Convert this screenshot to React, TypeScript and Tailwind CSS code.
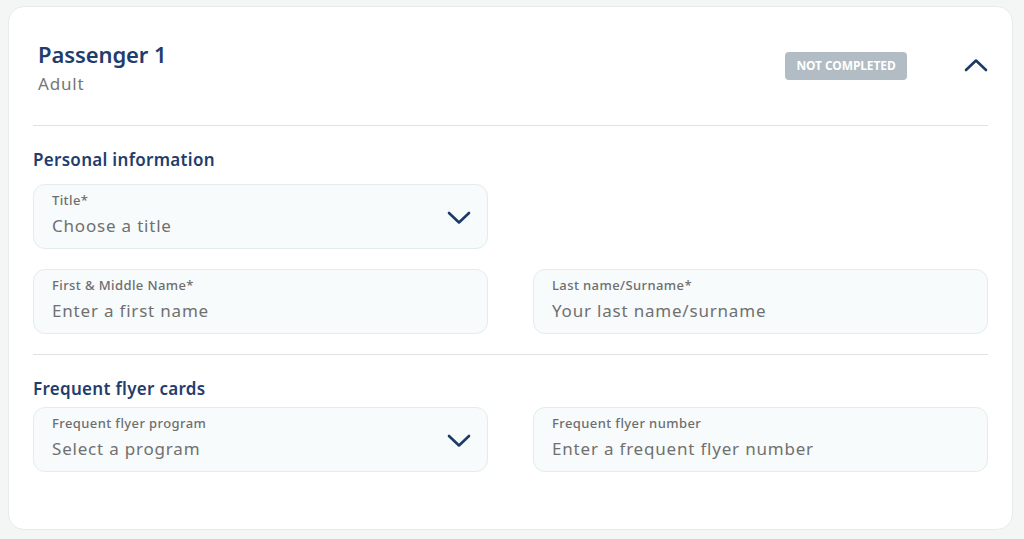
import React from "react";

const ChevronDown = () => (
  <svg width="24" height="14" viewBox="0 0 24 14" fill="none">
    <path d="M2 2L12 11.5L22 2" stroke="#1c3a68" strokeWidth="2.6" strokeLinecap="round" strokeLinejoin="round" />
  </svg>
);

const ChevronUp = () => (
  <svg width="24" height="14" viewBox="0 0 24 14" fill="none">
    <path d="M2 12L12 2.5L22 12" stroke="#1c3a68" strokeWidth="2.6" strokeLinecap="round" strokeLinejoin="round" />
  </svg>
);

function Field({ label, value, select }: { label: string; value: string; select?: boolean }) {
  return (
    <div className="flex h-[65px] items-center rounded-[12px] border border-[#e4ebee] bg-[#f7fbfc] pb-[4px] pl-[18px] pr-[16px]">
      <div className="flex flex-1 flex-col">
        <div className="text-[13px] leading-[18px] font-medium text-[#6e6e6e] tracking-[0.4px]">{label}</div>
        <div className="mt-[5px] text-[17px] leading-[24px] text-[#707070] tracking-[0.8px]">{value}</div>
      </div>
      {select && (
        <div className="mt-[6px]">
          <ChevronDown />
        </div>
      )}
    </div>
  );
}

export default function App() {
  return (
    <div className="min-h-[539px] w-full bg-[#f4f5f5] px-[8px] pt-[6px] pb-[9px]" style={{ fontFamily: '"Noto Sans", "Open Sans", sans-serif' }}>
      <div className="h-[524px] w-[1005px] rounded-[16px] border border-[#e8eaeb] bg-white px-[24px] pt-[33px]">
        <div className="flex items-start justify-between">
          <div className="pl-[5px]">
            <div className="text-[22px] leading-[28px] font-semibold text-[#1f3d6d] tracking-[-0.1px]">Passenger 1</div>
            <div className="mt-[4px] text-[17px] leading-[24px] text-[#767676] tracking-[0.8px]">Adult</div>
          </div>
          <div className="mt-[12px] flex items-center">
            <div className="flex h-[28px] w-[122px] items-center justify-center rounded-[4px] bg-[#b1bcc4] text-[12px] font-bold text-white tracking-[-0.1px]">
              NOT COMPLETED
            </div>
            <div className="ml-[57px] mt-[-3px]">
              <ChevronUp />
            </div>
          </div>
        </div>

        <div className="mt-[29px] h-[1px] bg-[#dfe2e4]" />

        <div className="mt-[22px] text-[17px] leading-[24px] font-semibold text-[#1f3d6d] tracking-[0.3px]">Personal information</div>
        <div className="mt-[12px] grid grid-cols-2 gap-x-[45px] gap-y-[20px]">
          <Field label="Title*" value="Choose a title" select />
          <div />
          <Field label="First & Middle Name*" value="Enter a first name" />
          <Field label="Last name/Surname*" value="Your last name/surname" />
        </div>

        <div className="mt-[20px] h-[1px] bg-[#dfe2e4]" />

        <div className="mt-[22px] text-[17px] leading-[24px] font-semibold text-[#1f3d6d] tracking-[0.3px]">Frequent flyer cards</div>
        <div className="mt-[6px] grid grid-cols-2 gap-x-[45px]">
          <Field label="Frequent flyer program" value="Select a program" select />
          <Field label="Frequent flyer number" value="Enter a frequent flyer number" />
        </div>
      </div>
    </div>
  );
}
